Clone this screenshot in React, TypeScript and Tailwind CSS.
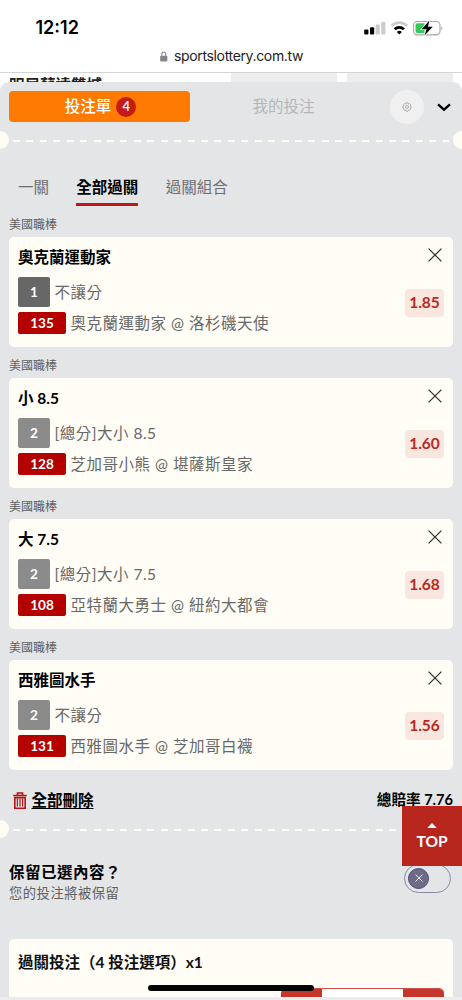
import React from "react";

type Bet = {
  pick: string;
  no: string;
  dark?: boolean;
  market: string;
  code: string;
  match: string;
  odds: string;
};

const bets: Bet[] = [
  { pick: "奧克蘭運動家", no: "1", dark: true, market: "不讓分", code: "135", match: "奧克蘭運動家 @ 洛杉磯天使", odds: "1.85" },
  { pick: "小 8.5", no: "2", market: "[總分]大小 8.5", code: "128", match: "芝加哥小熊 @ 堪薩斯皇家", odds: "1.60" },
  { pick: "大 7.5", no: "2", market: "[總分]大小 7.5", code: "108", match: "亞特蘭大勇士 @ 紐約大都會", odds: "1.68" },
  { pick: "西雅圖水手", no: "2", market: "不讓分", code: "131", match: "西雅圖水手 @ 芝加哥白襪", odds: "1.56" },
];

function StatusBar() {
  return (
    <header className="flex h-[73px] shrink-0 flex-col border-b border-[#d4d4d5] bg-white font-['Inter',sans-serif]">
      <div className="flex h-[46px] items-end justify-between pr-[19px] pl-[35.5px]">
        <span className="mb-[6px] text-[18px] leading-[24px] font-semibold text-black">12:12</span>
        <svg width="80" height="18" viewBox="0 0 80 18" className="mb-[10px]">
          <rect x="1.2" y="11.5" width="4.2" height="5" rx="1" fill="#000" />
          <rect x="7" y="9.3" width="4.2" height="7.2" rx="1" fill="#000" />
          <rect x="12.6" y="6.4" width="4.2" height="10.1" rx="1" fill="#ccc" />
          <rect x="18.2" y="3.7" width="4.2" height="12.8" rx="1" fill="#ccc" />
          <path d="M28.6 7.8a11 11 0 0 1 15.4 0" fill="none" stroke="#ccc" strokeWidth="2.6" />
          <path d="M31.6 11.3a6.8 6.8 0 0 1 9.4 0" fill="none" stroke="#000" strokeWidth="2.6" />
          <path d="M36.3 16.6l-2.5-2.6a3.7 3.7 0 0 1 5 0z" fill="#000" />
          <rect x="50.5" y="3.5" width="26.500" height="13.400" rx="3.8" fill="none" stroke="#a5a5a5" strokeWidth="1.1" />
          <path d="M54.500 5.300h7v9.800h-7a2 2 0 0 1-2-2v-5.800a2 2 0 0 1 2-2z" fill="#34c759" />
          <path d="M78.300 8.200v4c1.400-.5 1.400-3.500 0-4z" fill="#a5a5a5" />
          <path d="M66.400 2.500l-7.800 8.700h4.900l-2 6.300 8.300-8.800h-4.900z" fill="#000" stroke="#fff" strokeWidth="1.600" paintOrder="stroke" />
        </svg>
      </div>
      <div className="flex h-[20px] items-center gap-[6.500px] pl-[160px]">
        <svg width="7.500" height="11" viewBox="0 0 8 11">
          <path d="M1.900 5V3.100a2.100 2.400 0 0 1 4.200 0V5" fill="none" stroke="#85858a" strokeWidth="1.100" />
          <rect x="0.200" y="4.600" width="7.600" height="6.200" rx="1" fill="#85858a" />
        </svg>
        <span className="text-[14px] leading-5 tracking-[-0.350px] text-[#222]">sportslottery.com.tw</span>
      </div>
    </header>
  );
}

function DashedLine() {
  return (
    <div className="relative h-[18px] overflow-hidden">
      <div className="mx-[13px] flex h-[20px] items-center">
        <div className="h-[2px] w-full bg-[repeating-linear-gradient(90deg,#fffdf3_0_7px,transparent_7px_13.43px)]" />
      </div>
      <span className="absolute top-0 -left-[9px] size-[18px] rounded-full bg-[#fffdf3]" />
      <span className="absolute top-0 -right-[9px] size-[18px] rounded-full bg-[#fffdf3]" />
    </div>
  );
}

function BetCard({ bet }: { bet: Bet }) {
  return (
    <section className="h-[141px]">
      <h3 className="flex h-[21px] items-center pt-[3px] text-[12px] leading-[18px] text-[#606060]">美國職棒</h3>
      <div className="mt-[3px] flex h-[110px] justify-between rounded-[5px] bg-[#fffdf5] pr-[9px] pl-[9px]">
        <div>
          <div className="mt-[9px] h-[22px] text-[15.500px] leading-[22px] font-bold text-black">{bet.pick}</div>
          <div className="mt-[9px] flex h-[30px] items-center gap-[4.500px]">
            <span className={`flex h-[30px] w-[32px] items-center justify-center rounded-[2px] pt-px text-[13.600px] font-bold text-white ${bet.dark ? "bg-[#676767]" : "bg-[#8b8b8b]"}`}>{bet.no}</span>
            <span className="text-[15.500px] leading-[22px] tracking-[0.500px] whitespace-nowrap text-[#686868]">{bet.market}</span>
          </div>
          <div className="mt-[5px] flex h-[22px] items-center gap-[4.500px]">
            <span className="flex h-[22px] w-[48px] items-center justify-center rounded-[2px] bg-[#b50000] text-[13.600px] leading-[20px] font-bold text-white">{bet.code}</span>
            <span className="text-[15.500px] leading-[22px] tracking-[0.500px] whitespace-nowrap text-[#686868]">{bet.match}</span>
          </div>
        </div>
        <div className="flex flex-col items-end">
          <svg width="14" height="14" viewBox="0 0 14 14" className="mt-[11px] mr-[2.500px]">
            <path d="M.6.600l12.800 12.800M13.400.600L.6 13.400" stroke="#333" strokeWidth="1.300" />
          </svg>
          <span className="mt-[27px] flex h-[28px] w-[39px] items-center justify-center rounded-[4px] bg-[#f8e6df] text-[15.500px] font-bold text-[#b8291f]">{bet.odds}</span>
        </div>
      </div>
    </section>
  );
}

export default function App() {
  return (
    <div className="relative flex h-[1000px] w-[462px] flex-col overflow-hidden bg-white font-['Lato','Noto_Sans_CJK_TC',sans-serif]">
      <StatusBar />
      <div className="flex h-[9px] shrink-0 overflow-hidden">
        <span className="w-[231px] pt-[3px] pl-[9px] text-[15.500px] leading-[18px] font-bold text-[#222]">明尼蘇達雙城</span>
        <span className="w-[106px] bg-[#ededed]" />
        <span className="ml-[10px] w-[106px] bg-[#ededed]" />
      </div>

      <main className="h-[915px] overflow-hidden rounded-t-[9px] bg-[#e4e5e7]">
        <div className="flex h-[49px] items-center pl-[9px]">
          <button className="flex h-[31px] w-[181px] items-center justify-center gap-[5px] rounded-[4px] bg-[#ff7a00] pl-[2px] text-[15.500px] font-medium text-white">
            投注單
            <span className="flex size-[20px] items-center justify-center rounded-full bg-[#c51a16] pt-px text-[13px] font-semibold">4</span>
          </button>
          <button className="ml-[62.500px] w-[62px] text-[15.500px] whitespace-nowrap text-[#b5b5b6]">我的投注</button>
          <button className="ml-[75px] flex size-[34px] items-center justify-center rounded-full bg-[#f0f0f0]">
            <svg width="10" height="10" viewBox="0 0 24 24" fill="none" stroke="#a5a5a5" strokeWidth="2">
              <path d="M9.700 2h4.600l.7 3 2.700-1.500 3 3L19.200 9.200l2.800.7v4.200l-2.800.7 1.500 2.700-3 3L15 19l-.7 3H9.700L9 19l-2.700 1.500-3-3 1.500-2.700-2.800-.7V9.900l2.800-.7-1.500-2.700 3-3L9 5z" />
              <circle cx="12" cy="12" r="3.600" />
            </svg>
          </button>
          <svg width="14" height="9" viewBox="0 0 14 9" className="mt-[2px] ml-[13.500px]">
            <path d="M1 1.300L7 6.700l6-5.400" fill="none" stroke="#000" strokeWidth="2.300" />
          </svg>
        </div>
        <DashedLine />

        <nav className="mt-[27px] flex h-[30px] gap-[27.300px] pl-[18px] text-[15.500px] leading-[23px] text-[#6f6f70]">
          <span>一關</span>
          <span className="border-b-[3.500px] border-[#c01818] font-bold text-black">全部過關</span>
          <span>過關組合</span>
        </nav>

        <div className="mt-[7px] px-[9px]">
          {bets.map((bet) => (
            <BetCard key={bet.code} bet={bet} />
          ))}
        </div>

        <div className="mt-[12px] flex h-[22px] items-center justify-between px-[9px] text-[15.500px] leading-[22px] font-bold text-black">
          <button className="flex items-center gap-[4.500px] pl-[4px]">
            <svg width="14" height="17" viewBox="0 0 14 17" fill="none" stroke="#b91212">
              <path d="M.3 3.500h13.400M4.500 3V1h5v2" strokeWidth="1.600" />
              <path d="M1.800 5.600h10.400v10.600H1.800z" strokeWidth="1.600" />
              <path d="M4.400 6.500v8M7 6.500v8M9.600 6.500v8" strokeWidth="1.200" />
            </svg>
            <span className="underline decoration-1 underline-offset-[2px]">全部刪除</span>
          </button>
          <span className="text-[14.600px]">總賠率 7.76</span>
        </div>
        <div className="mt-[9px]">
          <DashedLine />
        </div>

        <div className="mt-[23px] flex h-[45px] justify-between pr-[11px] pl-[9px]">
          <div>
            <div className="text-[15.500px] leading-[23px] font-bold tracking-[0.500px] text-black">保留已選內容？</div>
            <div className="text-[13.300px] leading-[19px] tracking-[0.500px] text-[#606060]">您的投注將被保留</div>
          </div>
          <div className="mt-[2.500px] flex h-[29px] w-[47px] items-center rounded-full border border-[#8a87a6] pl-[3px]">
            <span className="flex size-[21px] items-center justify-center rounded-full border border-[#4d4874] bg-[#6d6b86]">
              <svg width="8" height="8" viewBox="0 0 8 8">
                <path d="M.5.500l7 7M7.500.500l-7 7" stroke="#eee" strokeWidth="1" />
              </svg>
            </span>
          </div>
        </div>

        <div className="mx-[9px] mt-[33px] h-[70px] rounded-t-[5px] bg-[#fffdf5] px-[9px] pt-[12px]">
          <div className="text-[15.500px] leading-[23px] font-bold whitespace-nowrap text-[#111]">過關投注（4 投注選項）x1</div>
          <div className="mt-[14px] ml-auto flex h-[30px] w-[163px] overflow-hidden rounded-[5px] border-t border-[#cf5048] bg-white">
            <span className="w-[41px] bg-[#c4362c]" />
            <span className="flex-1" />
            <span className="w-[41px] bg-[#c4362c]" />
          </div>
        </div>
      </main>
      <div className="h-[3px] shrink-0 bg-[#ececee]" />

      <button className="absolute top-[806px] right-0 flex h-[60px] w-[60px] flex-col items-center bg-[#b7261c] text-white">
        <svg width="10" height="5" viewBox="0 0 10 5" className="mt-[17px]">
          <path d="M5 0l4.800 5H.2z" fill="#fff" />
        </svg>
        <span className="mt-[2px] text-[15.500px] leading-[22px] font-bold">TOP</span>
      </button>
      <div className="absolute top-[985px] left-[148px] h-[6px] w-[166px] rounded-full bg-[#050505]" />
    </div>
  );
}
